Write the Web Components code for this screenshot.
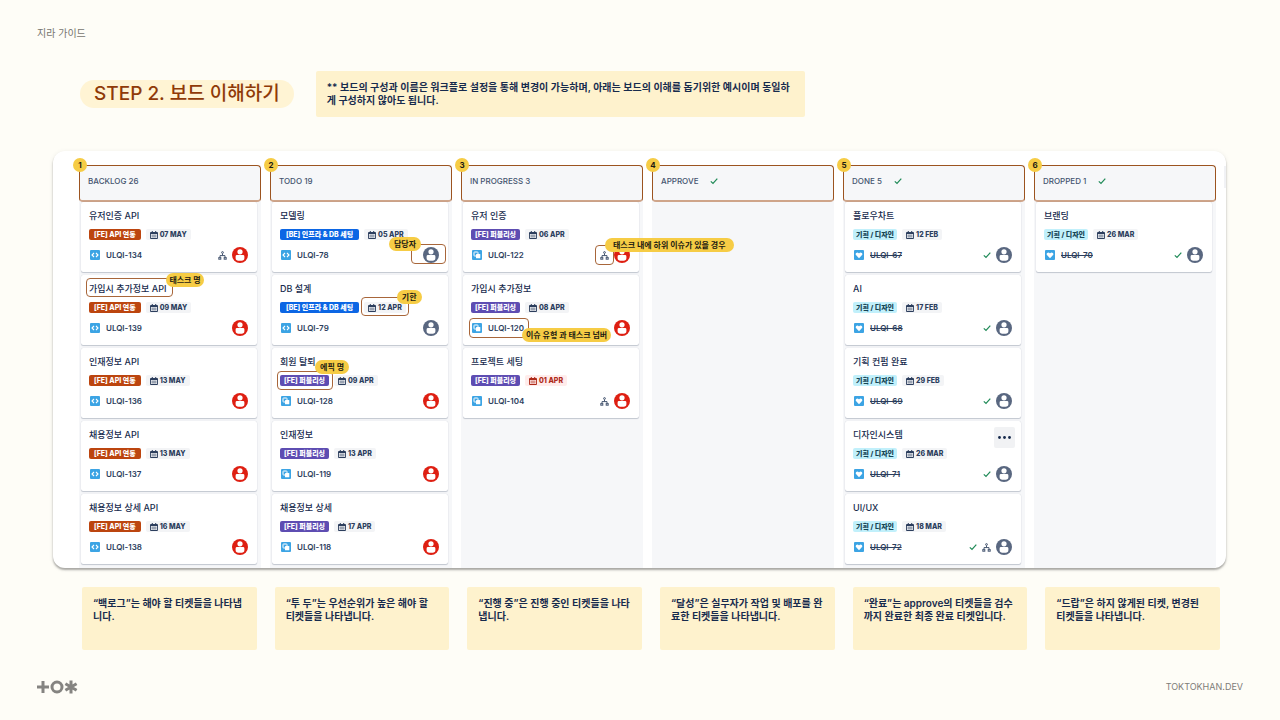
<!DOCTYPE html>
<html lang="ko">
<head>
<meta charset="utf-8">
<meta name="viewport" content="width=device-width, initial-scale=1">
<title>지라 가이드 - 보드 이해하기</title>
<style>
  body {
    margin: 0;
    background: #fefdf7;
    color: #172b4d;
    font-family: Inter, "Noto Sans CJK KR", sans-serif;
    font-size: 10px;
  }
</style>
</head>
<body>
<guide-page>
  <span slot="section">지라 가이드</span>
  <span slot="heading">STEP 2. 보드 이해하기</span>
  <guide-note slot="intro">** 보드의 구성과 이름은 워크플로 설정을 통해 변경이 가능하며, 아래는 보드의 이해를 돕기위한 예시이며 동일하게 구성하지 않아도 됩니다.</guide-note>

  <kanban-board>
    <board-column step="1" label="BACKLOG 26">
      <issue-card summary="유저인증 API" epic="[FE] API 연동" tone="orange" due="07 MAY" key-id="ULQI-134" kind="code" avatar="red" subtasks></issue-card>
      <issue-card summary="가입시 추가정보 API" epic="[FE] API 연동" tone="orange" due="09 MAY" key-id="ULQI-139" kind="code" avatar="red" mark="summary" hint="태스크 명"></issue-card>
      <issue-card summary="인재정보 API" epic="[FE] API 연동" tone="orange" due="13 MAY" key-id="ULQI-136" kind="code" avatar="red"></issue-card>
      <issue-card summary="채용정보 API" epic="[FE] API 연동" tone="orange" due="13 MAY" key-id="ULQI-137" kind="code" avatar="red"></issue-card>
      <issue-card summary="채용정보 상세 API" epic="[FE] API 연동" tone="orange" due="16 MAY" key-id="ULQI-138" kind="code" avatar="red"></issue-card>
    </board-column>
    <board-column step="2" label="TODO 19">
      <issue-card summary="모델링" epic="[BE] 인프라 &amp; DB 세팅" tone="blue" due="05 APR" key-id="ULQI-78" kind="code" avatar="grey" mark="assignee" hint="담당자"></issue-card>
      <issue-card summary="DB 설계" epic="[BE] 인프라 &amp; DB 세팅" tone="blue" due="12 APR" key-id="ULQI-79" kind="code" avatar="grey" mark="due" hint="기한"></issue-card>
      <issue-card summary="회원 탈퇴" epic="[FE] 퍼블리싱" tone="purple" due="09 APR" key-id="ULQI-128" kind="copy" avatar="red" mark="epic" hint="에픽 명"></issue-card>
      <issue-card summary="인재정보" epic="[FE] 퍼블리싱" tone="purple" due="13 APR" key-id="ULQI-119" kind="copy" avatar="red"></issue-card>
      <issue-card summary="채용정보 상세" epic="[FE] 퍼블리싱" tone="purple" due="17 APR" key-id="ULQI-118" kind="copy" avatar="red"></issue-card>
    </board-column>
    <board-column step="3" label="IN PROGRESS 3">
      <issue-card summary="유저 인증" epic="[FE] 퍼블리싱" tone="purple" due="06 APR" key-id="ULQI-122" kind="copy" avatar="red" subtasks mark="subtasks" hint="태스크 내에 하위 이슈가 있을 경우"></issue-card>
      <issue-card summary="가입시 추가정보" epic="[FE] 퍼블리싱" tone="purple" due="08 APR" key-id="ULQI-120" kind="copy" avatar="red" mark="key" hint="이슈 유형 과 태스크 넘버"></issue-card>
      <issue-card summary="프로젝트 세팅" epic="[FE] 퍼블리싱" tone="purple" due="01 APR" overdue key-id="ULQI-104" kind="copy" avatar="red" subtasks></issue-card>
    </board-column>
    <board-column step="4" label="APPROVE" done></board-column>
    <board-column step="5" label="DONE 5" done>
      <issue-card summary="플로우차트" epic="기획 / 디자인" tone="teal" due="12 FEB" key-id="ULQI-67" kind="heart" avatar="grey" done></issue-card>
      <issue-card summary="AI" epic="기획 / 디자인" tone="teal" due="17 FEB" key-id="ULQI-68" kind="heart" avatar="grey" done></issue-card>
      <issue-card summary="기획 컨펌 완료" epic="기획 / 디자인" tone="teal" due="29 FEB" key-id="ULQI-69" kind="heart" avatar="grey" done></issue-card>
      <issue-card summary="디자인시스템" epic="기획 / 디자인" tone="teal" due="26 MAR" key-id="ULQI-71" kind="heart" avatar="grey" done menu></issue-card>
      <issue-card summary="UI/UX" epic="기획 / 디자인" tone="teal" due="18 MAR" key-id="ULQI-72" kind="heart" avatar="grey" done subtasks></issue-card>
    </board-column>
    <board-column step="6" label="DROPPED 1" done>
      <issue-card summary="브랜딩" epic="기획 / 디자인" tone="teal" due="26 MAR" key-id="ULQI-70" kind="heart" avatar="grey" done></issue-card>
    </board-column>
  </kanban-board>

  <guide-note slot="notes">“백로그”는 해야 할 티켓들을 나타냅니다.</guide-note>
  <guide-note slot="notes">“투 두”는 우선순위가 높은 해야 할 티켓들을 나타냅니다.</guide-note>
  <guide-note slot="notes">“진행 중”은 진행 중인 티켓들을 나타냅니다.</guide-note>
  <guide-note slot="notes">“달성”은 실무자가 작업 및 배포를 완료한 티켓들을 나타냅니다.</guide-note>
  <guide-note slot="notes">“완료”는 approve의 티켓들을 검수까지 완료한 최종 완료 티켓입니다.</guide-note>
  <guide-note slot="notes">“드랍”은 하지 않게된 티켓, 변경된 티켓들을 나타냅니다.</guide-note>
  <span slot="brand">TOKTOKHAN.DEV</span>
</guide-page>

<script>
const define = (name, template) => {
  customElements.define(name, class extends HTMLElement {
    connectedCallback() {
      if (this.shadowRoot) return;
      this.attachShadow({ mode: 'open' }).innerHTML = template(this);
    }
  });
};
const escapeText = (s) => (s || '').replace(/&/g, '&amp;').replace(/</g, '&lt;');

define('guide-page', () => `
<style>
  :host { display: block; padding: 26px 37px; }
  header { color: #77756f; font-size: 10px; line-height: 14px; }
  .lead { display: flex; align-items: center; gap: 22px; margin: 31px 43px 34px; }
  h1 {
    margin: 0; padding: 0 14px; flex: none; border-radius: 14px;
    background: #fff4d4; color: #8f3a08;
    font-size: 19px; font-weight: 500; line-height: 28px;
  }
  .intro { flex: 0 1 489px; }
  main { margin: 0 17px 0 16px; }
  .notes {
    display: grid; grid-template-columns: repeat(6, 1fr); gap: 18px;
    margin: 19px 23px 30px 45px;
  }
  ::slotted(guide-note[slot="notes"]) { min-height: 43px; }
  footer { display: flex; align-items: center; justify-content: space-between; color: #7d7c78; font-size: 9px; line-height: 14px; }
  svg { display: block; }
</style>
<header><slot name="section"></slot></header>
<div class="lead">
  <h1><slot name="heading"></slot></h1>
  <div class="intro"><slot name="intro"></slot></div>
</div>
<main><slot></slot></main>
<div class="notes"><slot name="notes"></slot></div>
<footer>
  <svg width="41" height="14" viewBox="0 0 41 14" fill="none" stroke="#858481" stroke-width="3" role="img" aria-label="TOKTOKHAN">
    <path d="M0 7h12M6 1v12"/>
    <circle cx="20" cy="7" r="5"/>
    <path d="M34 .6v12.8M28.4 3.8l11.2 6.4M39.6 3.8l-11.2 6.4"/>
  </svg>
  <slot name="brand"></slot>
</footer>`);

define('guide-note', () => `
<style>
  :host {
    display: block; padding: 10px 11px; border-radius: 2px;
    background: #fef2cd; color: #172b4d;
    font-size: 10px; font-weight: 600; line-height: 13px; word-break: break-all;
  }
</style>
<slot></slot>`);

define('kanban-board', () => `
<style>
  :host {
    display: block; position: relative; padding: 14px 10px 0 26px; border-radius: 12px;
    background: #fff; box-shadow: 0 2px 2px #0000004d, 0 1px 5px #00000014;
  }
  .columns { display: grid; grid-template-columns: repeat(6, 1fr); gap: 9px; }
  .next { position: absolute; top: 15px; right: 0; width: 2px; height: 22px; background: #f1f2f5; }
</style>
<div class="columns"><slot></slot></div>
<div class="next"></div>`);

const check = `<svg class="check" width="8" height="8" viewBox="0 0 8 8" fill="none" stroke="#1f8a57" stroke-width="1.2" role="img" aria-label="완료"><path d="M.8 4.4L3 6.5 7.3 1.6"/></svg>`;

define('board-column', (el) => `
<style>
  :host { display: block; min-width: 0; background: #f6f7f9; }
  header {
    position: relative; display: flex; align-items: center; gap: 12px; box-sizing: border-box;
    height: 37px; padding: 0 8px 4px; border: 1px solid #9c5420; border-bottom: 2px solid #cfa58a;
    border-radius: 4px; background: #f6f7f9;
  }
  h2 { margin: 0; color: #44546f; font-size: 8px; font-weight: 500; line-height: 12px; }
  .step {
    position: absolute; top: -8px; left: -7px; width: 14px; height: 14px; border-radius: 50%;
    background: #f6cc45; color: #1c1a12; font-size: 8px; font-weight: 700; line-height: 14px; text-align: center;
  }
  .cards { display: grid; gap: 3px; padding: 0 4px 4px 2px; }
</style>
<header>
  <span class="step">${el.getAttribute('step')}</span>
  <h2>${escapeText(el.getAttribute('label'))}</h2>
  ${el.hasAttribute('done') ? check : ''}
</header>
<div class="cards"><slot></slot></div>`);

define('hint-mark', () => `
<style>
  :host { display: flex; align-items: center; position: relative; }
  .frame { position: absolute; z-index: 2; inset: var(--frame); border: 1px solid #a8663a; border-radius: 4px; pointer-events: none; }
  .hint {
    position: absolute; left: var(--hint-x); top: var(--hint-y); padding: 0 var(--hint-pad, 5px); border-radius: 7px;
    background: #f6cc45; color: #1c1a12; font-size: 8px; font-weight: 700; line-height: 14px; white-space: nowrap;
  }
</style>
<slot></slot>
<div class="frame"><span class="hint"><slot name="hint"></slot></span></div>`);

const kinds = {
  code: '<path d="M4 3L2 5l2 2M6 3l2 2-2 2" fill="none" stroke="#fff" stroke-width="1.1"/>',
  copy: '<rect x="2" y="2" width="4" height="4" rx=".6" fill="none" stroke="#fff"/><rect x="4" y="4" width="4.3" height="4.3" rx=".6" fill="#fff"/>',
  heart: '<path d="M5 8.2L2.2 5.3a1.6 1.6 0 0 1 0-2.3 1.7 1.7 0 0 1 2.4 0l.4.4.4-.4a1.7 1.7 0 0 1 2.4 0 1.6 1.6 0 0 1 0 2.3z" fill="#fff"/>'
};

define('issue-card', (el) => {
  const get = (name) => escapeText(el.getAttribute(name));
  const wrap = (name, html) => el.getAttribute('mark') === name
    ? `<hint-mark class="mark-${name}">${html}<span slot="hint">${get('hint')}</span></hint-mark>`
    : html;
  const avatarColor = el.getAttribute('avatar') === 'red' ? '#de1f12' : '#596780';
  const subtaskIcon = `<svg width="9" height="9" viewBox="0 0 9 9" fill="none" stroke="#44546f" role="img" aria-label="하위 이슈">
    <circle cx="4.5" cy="1.5" r=".9"/><path d="M4.5 2.6v1.7M2 6V4.6h5V6"/><rect x=".8" y="6.6" width="2" height="1.6"/><rect x="6.2" y="6.6" width="2" height="1.6"/></svg>`;
  return `
<style>
  :host {
    display: block; position: relative; padding: 8px 9px 9px 8px; border-radius: 2px; background: #fff;
    box-shadow: 0 1px 1px #091e4233, 0 0 1px #091e4233;
  }
  svg { display: block; flex: none; }
  h3 { display: flex; margin: 0 0 7px; font-size: 9px; font-weight: 500; line-height: 12px; white-space: nowrap; }
  .tags { display: flex; gap: 5px; margin-bottom: 7px; font-size: 7px; font-weight: 800; line-height: 11px; white-space: nowrap; }
  .epic { border-radius: 2px; color: #fff; }
  .orange { padding: 0 5px; background: #bc450f; }
  .blue { padding: 0 6px; background: #0c66e4; }
  .purple { padding: 0 4px; background: #5e4db2; }
  .teal { padding: 0 3px; background: #c1f0fb; color: #164555; }
  .due { display: flex; align-items: center; gap: 2px; padding: 0 4px; border-radius: 2px; background: #f3f4f6; color: #2c3e5d; }
  .overdue { background: #ffeceb; color: #ae2a19; }
  .foot { display: flex; align-items: center; justify-content: space-between; height: 16px; }
  .id, .state { display: flex; align-items: center; }
  .id { gap: 6px; height: 16px; padding-left: 1px; }
  .state { gap: 5px; }
  a { color: #2c3e5d; font-size: 8px; font-weight: 600; line-height: 12px; text-decoration: none; }
  a.done { text-decoration: line-through; }
  button {
    position: absolute; top: 6px; right: 6px; display: grid; place-items: center;
    width: 21px; height: 21px; padding: 0; border: 0; border-radius: 2px; background: #f1f2f4;
  }
  .mark-summary { --frame: -5px -7px -2px -3px; --hint-x: calc(100% - 6px); --hint-y: -6px; --hint-pad: 3px; }
  .mark-assignee { --frame: -3px -7px -1px -12px; --hint-x: -23px; --hint-y: -8px; }
  .mark-due { --frame: -5px -3px -3px -3px; --hint-x: calc(100% - 11px); --hint-y: -8px; }
  .mark-epic { --frame: -4px -4px -4px -3px; --hint-x: calc(100% - 17px); --hint-y: -12px; }
  .mark-subtasks { --frame: -6px -5px -5px -5px; --hint-x: 9px; --hint-y: -8px; --hint-pad: 8px; }
  .mark-key { --frame: -2px -5px -2px -2px; --hint-x: calc(100% - 6px); --hint-y: 9px; --hint-pad: 4px; }
</style>
<h3>${wrap('summary', `<span>${get('summary')}</span>`)}</h3>
<div class="tags">
  ${wrap('epic', `<span class="epic ${get('tone')}">${get('epic')}</span>`)}
  ${wrap('due', `<span class="due ${el.hasAttribute('overdue') ? 'overdue' : ''}">
    <svg width="8" height="8" viewBox="0 0 8 8" fill="currentColor" aria-hidden="true"><path fill-rule="evenodd" d="M1 1h.8V0h1v1h2.4V0h1v1H7a1 1 0 0 1 1 1v5a1 1 0 0 1-1 1H1a1 1 0 0 1-1-1V2a1 1 0 0 1 1-1zM.9 3v4.1h6.2V3z"/><path opacity=".45" d="M1.5 3.5h5v3h-5z"/></svg>
    <span>${get('due')}</span></span>`)}
</div>
<div class="foot">
  ${wrap('key', `<span class="id">
    <svg width="10" height="10" viewBox="0 0 10 10" aria-hidden="true"><rect width="10" height="10" rx="1" fill="#3ca4e4"/>${kinds[get('kind')]}</svg>
    <a href="#${get('key-id')}" class="${el.hasAttribute('done') ? 'done' : ''}">${get('key-id')}</a>
  </span>`)}
  <span class="state">
    ${el.hasAttribute('done') ? check : ''}
    ${el.hasAttribute('subtasks') ? wrap('subtasks', subtaskIcon) : ''}
    ${wrap('assignee', `<svg width="16" height="16" viewBox="0 0 16 16" role="img" aria-label="담당자"><circle cx="8" cy="8" r="8" fill="${avatarColor}"/><circle cx="8" cy="4.8" r="2.6" fill="#fff"/><path d="M3.6 9.4a1.4 1.4 0 0 1 1.4-1.4h6a1.4 1.4 0 0 1 1.4 1.4v1.8a4.4 2.6 0 0 1-8.8 0z" fill="#fff"/></svg>`)}
  </span>
</div>
${el.hasAttribute('menu') ? `<button type="button" aria-label="더보기"><svg width="13" height="3" viewBox="0 0 13 3" fill="#172b4d"><circle cx="1.5" cy="1.5" r="1.4"/><circle cx="6.5" cy="1.5" r="1.4"/><circle cx="11.5" cy="1.5" r="1.4"/></svg></button>` : ''}`;
});
</script>
</body>
</html>
